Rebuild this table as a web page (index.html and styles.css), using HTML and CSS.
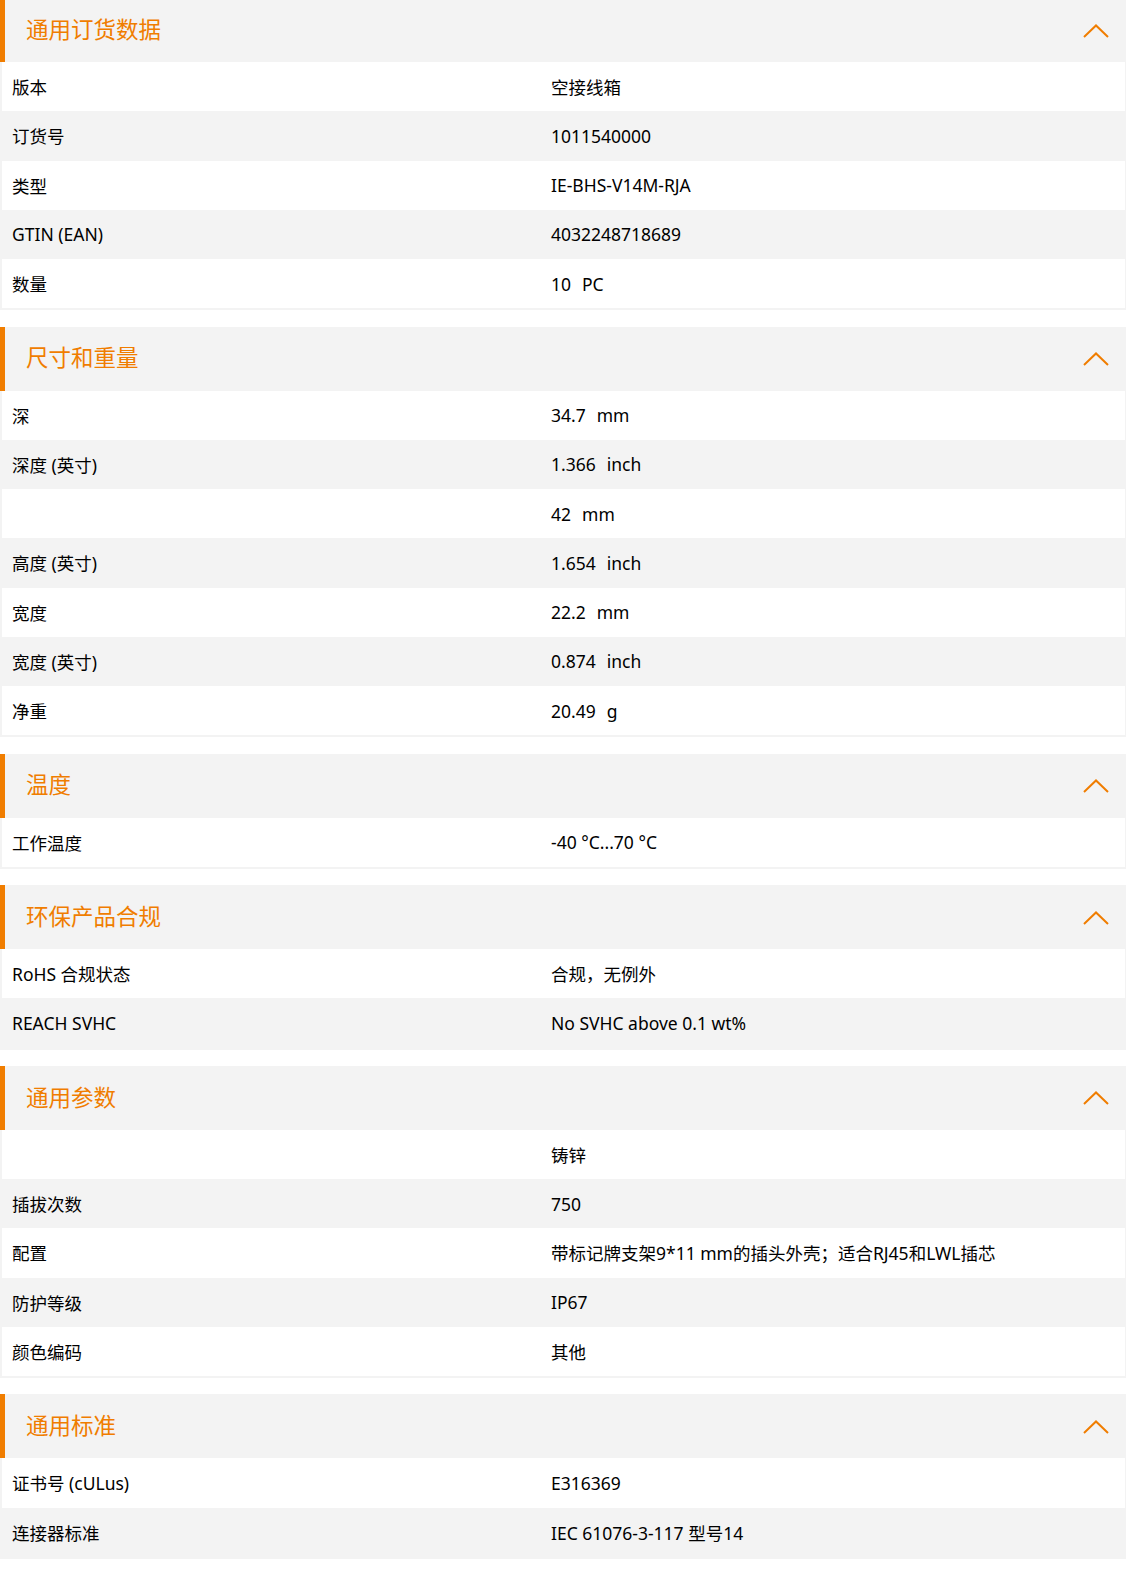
FILE: index.html
```html
<!DOCTYPE html>
<html lang="zh-CN">
<head>
<meta charset="utf-8">
<title>产品数据</title>
<link rel="stylesheet" href="styles.css">
</head>
<body>
<div class="page">

  <section class="sec">
    <div class="sec-head">
      <h2 class="sec-title">通用订货数据</h2>
      <svg class="chev" viewBox="0 0 26 14" width="26" height="14"><polyline points="1,13 13,1.5 25,13"/></svg>
    </div>
    <div class="rows">
      <div class="row"><div class="k">版本</div><div class="v">空接线箱</div></div>
      <div class="row"><div class="k">订货号</div><div class="v">1011540000</div></div>
      <div class="row"><div class="k">类型</div><div class="v">IE-BHS-V14M-RJA</div></div>
      <div class="row"><div class="k">GTIN (EAN)</div><div class="v">4032248718689</div></div>
      <div class="row"><div class="k">数量</div><div class="v">10<span class="u">PC</span></div></div>
    </div>
  </section>

  <section class="sec">
    <div class="sec-head">
      <h2 class="sec-title">尺寸和重量</h2>
      <svg class="chev" viewBox="0 0 26 14" width="26" height="14"><polyline points="1,13 13,1.5 25,13"/></svg>
    </div>
    <div class="rows">
      <div class="row"><div class="k">深</div><div class="v">34.7<span class="u">mm</span></div></div>
      <div class="row"><div class="k">深度 (英寸)</div><div class="v">1.366<span class="u">inch</span></div></div>
      <div class="row"><div class="k"></div><div class="v">42<span class="u">mm</span></div></div>
      <div class="row"><div class="k">高度 (英寸)</div><div class="v">1.654<span class="u">inch</span></div></div>
      <div class="row"><div class="k">宽度</div><div class="v">22.2<span class="u">mm</span></div></div>
      <div class="row"><div class="k">宽度 (英寸)</div><div class="v">0.874<span class="u">inch</span></div></div>
      <div class="row"><div class="k">净重</div><div class="v">20.49<span class="u">g</span></div></div>
    </div>
  </section>

  <section class="sec">
    <div class="sec-head">
      <h2 class="sec-title">温度</h2>
      <svg class="chev" viewBox="0 0 26 14" width="26" height="14"><polyline points="1,13 13,1.5 25,13"/></svg>
    </div>
    <div class="rows">
      <div class="row"><div class="k">工作温度</div><div class="v">-40 °C...70 °C</div></div>
    </div>
  </section>

  <section class="sec">
    <div class="sec-head">
      <h2 class="sec-title">环保产品合规</h2>
      <svg class="chev" viewBox="0 0 26 14" width="26" height="14"><polyline points="1,13 13,1.5 25,13"/></svg>
    </div>
    <div class="rows">
      <div class="row"><div class="k">RoHS 合规状态</div><div class="v">合规，无例外</div></div>
      <div class="row"><div class="k">REACH SVHC</div><div class="v">No SVHC above 0.1 wt%</div></div>
    </div>
  </section>

  <section class="sec">
    <div class="sec-head">
      <h2 class="sec-title">通用参数</h2>
      <svg class="chev" viewBox="0 0 26 14" width="26" height="14"><polyline points="1,13 13,1.5 25,13"/></svg>
    </div>
    <div class="rows">
      <div class="row"><div class="k"></div><div class="v">铸锌</div></div>
      <div class="row"><div class="k">插拔次数</div><div class="v">750</div></div>
      <div class="row"><div class="k">配置</div><div class="v">带标记牌支架9*11 mm的插头外壳；适合RJ45和LWL插芯</div></div>
      <div class="row"><div class="k">防护等级</div><div class="v">IP67</div></div>
      <div class="row"><div class="k">颜色编码</div><div class="v">其他</div></div>
    </div>
  </section>

  <section class="sec">
    <div class="sec-head">
      <h2 class="sec-title">通用标准</h2>
      <svg class="chev" viewBox="0 0 26 14" width="26" height="14"><polyline points="1,13 13,1.5 25,13"/></svg>
    </div>
    <div class="rows">
      <div class="row"><div class="k">证书号 (cULus)</div><div class="v">E316369</div></div>
      <div class="row"><div class="k">连接器标准</div><div class="v">IEC 61076-3-117 型号14</div></div>
    </div>
  </section>

</div>
</body>
</html>
```

FILE: styles.css
```css
html, body {
  margin: 0;
  padding: 0;
  background: #ffffff;
}

body {
  font-family: "Noto Sans", "Noto Sans CJK SC", sans-serif;
  color: #000000;
}

.page {
  margin-top: -2px;
  display: flex;
  flex-direction: column;
  gap: 16.25px;
}

.sec-head {
  height: 64px;
  box-sizing: border-box;
  background: #f3f3f3;
  border-left: 5px solid #f07d00;
  padding: 0 17px 0 21px;
  display: flex;
  align-items: center;
  justify-content: space-between;
}

.sec-title {
  margin: 0;
  font-size: 22.5px;
  font-weight: 400;
  color: #f07d00;
  line-height: 1;
}

.chev {
  display: block;
  fill: none;
  stroke: #f07d00;
  stroke-width: 2;
  margin-top: 1px;
}

.rows {
  border: 2px solid #f3f3f3;
  border-top: none;
  border-right-width: 1px;
}

.row {
  height: 49.25px;
  display: grid;
  grid-template-columns: 537px 1fr;
  align-items: center;
  font-size: 17.5px;
  background: #ffffff;
}

.row:nth-child(even) {
  background: #f3f3f3;
}

.k, .v {
  padding-left: 10px;
  white-space: nowrap;
}

.v {
  padding-left: 12px;
}

.u {
  margin-left: 11px;
}
```
